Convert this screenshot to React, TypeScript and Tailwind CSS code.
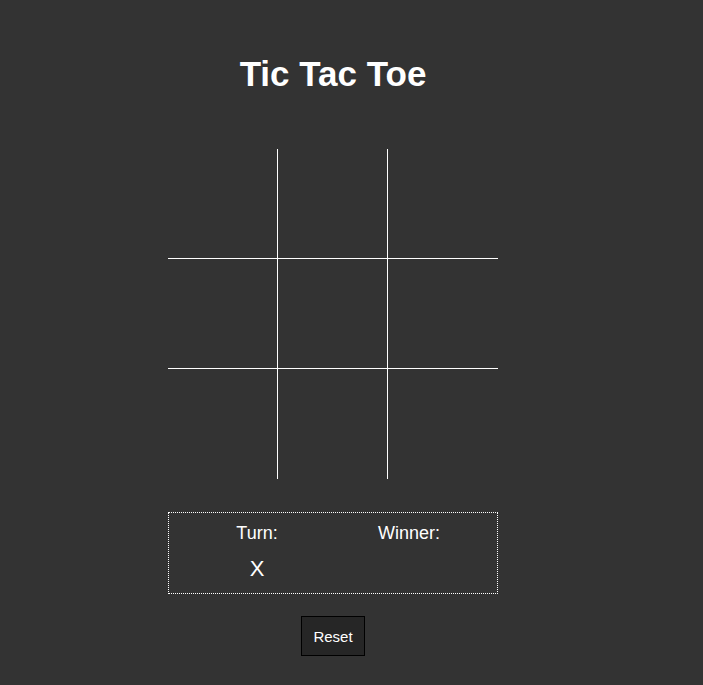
import { useState } from 'react';

type Cell = 'X' | 'O' | null;

export default function App() {
  const [cells, setCells] = useState<Cell[]>(Array(9).fill(null));
  const [turn, setTurn] = useState<'X' | 'O'>('X');
  const [winner, setWinner] = useState<string>('');

  const lines = [
    [0, 1, 2], [3, 4, 5], [6, 7, 8],
    [0, 3, 6], [1, 4, 7], [2, 5, 8],
    [0, 4, 8], [2, 4, 6],
  ];

  const play = (i: number) => {
    if (cells[i] || winner) return;
    const next = [...cells];
    next[i] = turn;
    setCells(next);
    const won = lines.find(([a, b, c]) => next[a] && next[a] === next[b] && next[a] === next[c]);
    if (won) setWinner(turn);
    setTurn(turn === 'X' ? 'O' : 'X');
  };

  const reset = () => {
    setCells(Array(9).fill(null));
    setTurn('X');
    setWinner('');
  };

  return (
    <div className="min-h-[685px] bg-[#333333] text-white font-['Liberation_Sans',Arial,sans-serif]">
      <div className="w-[666px] flex flex-col items-center pt-[54px]">
        <h1 className="text-[35px] font-bold leading-[normal]">Tic Tac Toe</h1>

        <div className="mt-[55px] grid grid-cols-[110px_110px_110px] grid-rows-[110px_110px_110px]">
          {cells.map((cell, i) => (
            <div
              key={i}
              onClick={() => play(i)}
              className={
                'flex items-center justify-center text-[48px] cursor-pointer border-white ' +
                (i % 3 < 2 ? 'border-r ' : '') +
                (i < 6 ? 'border-b' : '')
              }
            >
              {cell}
            </div>
          ))}
        </div>

        <div className="mt-[33px] w-[330px] border border-dotted border-white px-3 pt-[10px] pb-[11px]">
          <div className="grid grid-cols-2 text-center">
            <div className="flex flex-col items-center">
              <span className="text-[18px] leading-[normal]">Turn:</span>
              <span className="mt-[12px] text-[22px] leading-[normal]">{winner ? '' : turn}</span>
            </div>
            <div className="flex flex-col items-center">
              <span className="text-[18px] leading-[normal]">Winner:</span>
              <span className="mt-[12px] text-[22px] leading-[normal]">{winner}</span>
            </div>
          </div>
        </div>

        <button
          onClick={reset}
          className="mt-[22px] h-[40px] px-[11px] bg-[#262626] border border-black text-[15px] text-white leading-[normal]"
        >
          Reset
        </button>
      </div>
    </div>
  );
}
